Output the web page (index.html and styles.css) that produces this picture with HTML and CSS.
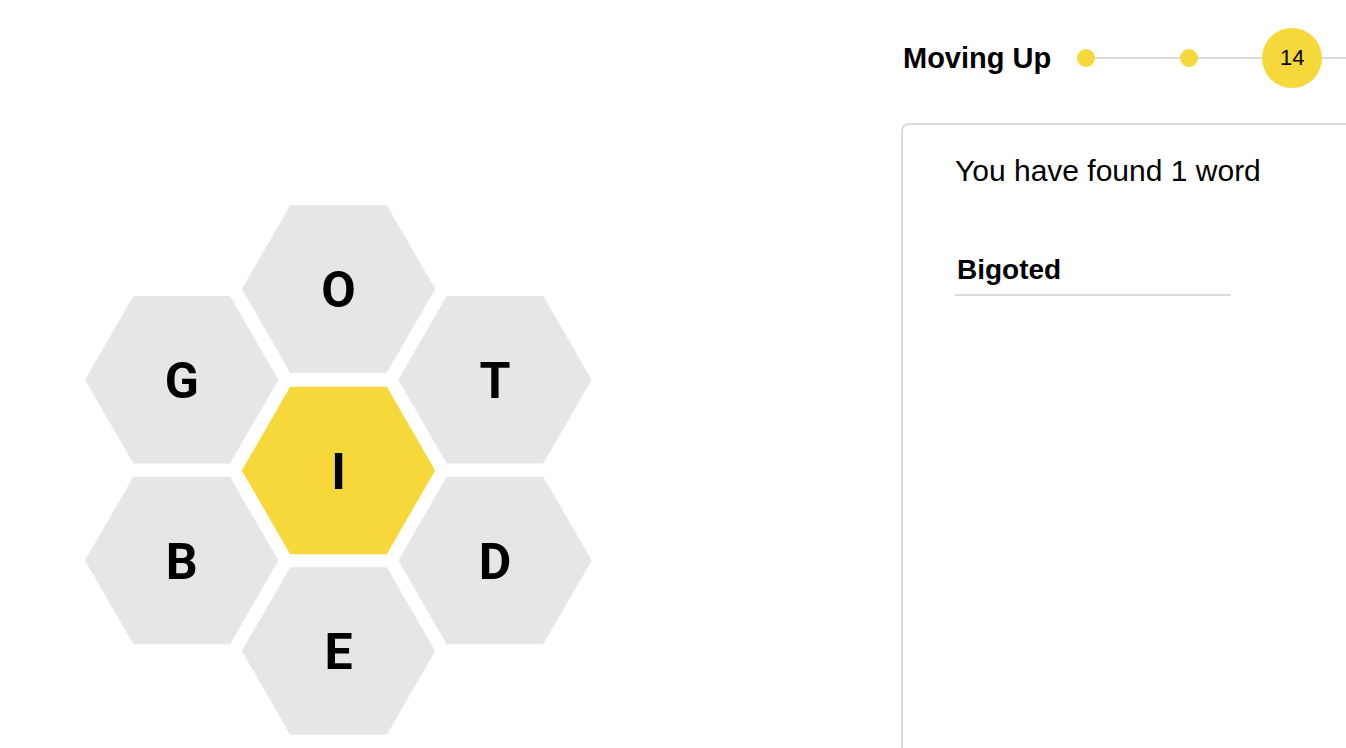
FILE: index.html
```html
<!DOCTYPE html>
<html lang="en">
<head>
    <meta charset="UTF-8">
    <meta name="viewport" content="width=device-width, initial-scale=1.0">
    <title>Spelling Bee</title>
    <link rel="stylesheet" href="styles.css">
</head>
<body>
    <main class="game">
        <section class="hive-area">
            <svg class="hive" width="520" height="540" viewBox="0 0 520 540">
                <g class="cell" transform="translate(258.5 89)">
                    <polygon points="-96.7,0 -48.3,-83.75 48.3,-83.75 96.7,0 48.3,83.75 -48.3,83.75"/>
                    <text y="18">O</text>
                </g>
                <g class="cell" transform="translate(101.7 179.7)">
                    <polygon points="-96.7,0 -48.3,-83.75 48.3,-83.75 96.7,0 48.3,83.75 -48.3,83.75"/>
                    <text y="18">G</text>
                </g>
                <g class="cell" transform="translate(415 179.7)">
                    <polygon points="-96.7,0 -48.3,-83.75 48.3,-83.75 96.7,0 48.3,83.75 -48.3,83.75"/>
                    <text y="18">T</text>
                </g>
                <g class="cell center" transform="translate(258.5 270.5)">
                    <polygon points="-96.7,0 -48.3,-83.75 48.3,-83.75 96.7,0 48.3,83.75 -48.3,83.75"/>
                    <text y="18">I</text>
                </g>
                <g class="cell" transform="translate(101.7 360.5)">
                    <polygon points="-96.7,0 -48.3,-83.75 48.3,-83.75 96.7,0 48.3,83.75 -48.3,83.75"/>
                    <text y="18">B</text>
                </g>
                <g class="cell" transform="translate(415 360.5)">
                    <polygon points="-96.7,0 -48.3,-83.75 48.3,-83.75 96.7,0 48.3,83.75 -48.3,83.75"/>
                    <text y="18">D</text>
                </g>
                <g class="cell" transform="translate(258.5 451)">
                    <polygon points="-96.7,0 -48.3,-83.75 48.3,-83.75 96.7,0 48.3,83.75 -48.3,83.75"/>
                    <text y="18">E</text>
                </g>
            </svg>
        </section>

        <aside class="sidebar">
            <div class="status">
                <h4 class="rank">Moving Up</h4>
                <div class="track">
                    <span class="dot"></span>
                    <span class="seg seg-a"></span>
                    <span class="dot"></span>
                    <span class="seg seg-b"></span>
                    <span class="score">14</span>
                    <span class="seg seg-rest"></span>
                </div>
            </div>

            <div class="word-panel">
                <p class="found">You have found 1 word</p>
                <ul class="word-list">
                    <li>Bigoted</li>
                </ul>
            </div>
        </aside>
    </main>
</body>
</html>
```

FILE: styles.css
```css
body, html {
    margin: 0;
    padding: 0;
    background-color: #ffffff;
    color: #000000;
    font-family: "Liberation Sans", Arial, sans-serif;
}

body {
    width: 1346px;
    height: 748px;
    overflow: hidden;
}

.game {
    display: flex;
    width: 1346px;
}

.hive-area {
    width: 821px;
    flex-shrink: 0;
    padding: 200px 0 0 80px;
}

.hive {
    display: block;
}

.cell polygon {
    fill: #e6e6e6;
}

.cell.center polygon {
    fill: #f6d83a;
}

.cell text {
    font-family: Roboto, "Liberation Sans", sans-serif;
    font-weight: 700;
    font-size: 50px;
    text-anchor: middle;
    fill: #000000;
}

.sidebar {
    width: 445px;
    flex-shrink: 0;
}

.status {
    display: flex;
    align-items: center;
    height: 60px;
    margin-top: 28px;
    padding-left: 2px;
}

.rank {
    margin: 0;
    font-size: 29px;
    font-weight: 700;
    white-space: nowrap;
}

.track {
    display: flex;
    align-items: center;
    flex: 1;
    margin-left: 26px;
}

.dot {
    width: 18px;
    height: 18px;
    border-radius: 50%;
    background-color: #f6d83a;
    flex-shrink: 0;
}

.seg {
    height: 2px;
    background-color: #dcdcdc;
    flex-shrink: 0;
}

.seg-a {
    width: 85px;
}

.seg-b {
    width: 64px;
}

.seg-rest {
    flex: 1;
}

.score {
    width: 60px;
    height: 60px;
    border-radius: 50%;
    background-color: #f6d83a;
    display: flex;
    align-items: center;
    justify-content: center;
    font-size: 22px;
    flex-shrink: 0;
}

.word-panel {
    margin-top: 35px;
    height: 700px;
    border: 2px solid #dcdcdc;
    border-right: none;
    border-radius: 8px 0 0 0;
    padding: 28px 0 0 52px;
}

.found {
    margin: 0;
    font-size: 30px;
    line-height: 35px;
}

.word-list {
    list-style-type: none;
    margin: 66px 0 0 0;
    padding: 0;
    width: 276px;
}

.word-list li {
    font-size: 28px;
    font-weight: 700;
    line-height: 32px;
    padding: 0 0 8px 2px;
    border-bottom: 2px solid #dcdcdc;
}
```
